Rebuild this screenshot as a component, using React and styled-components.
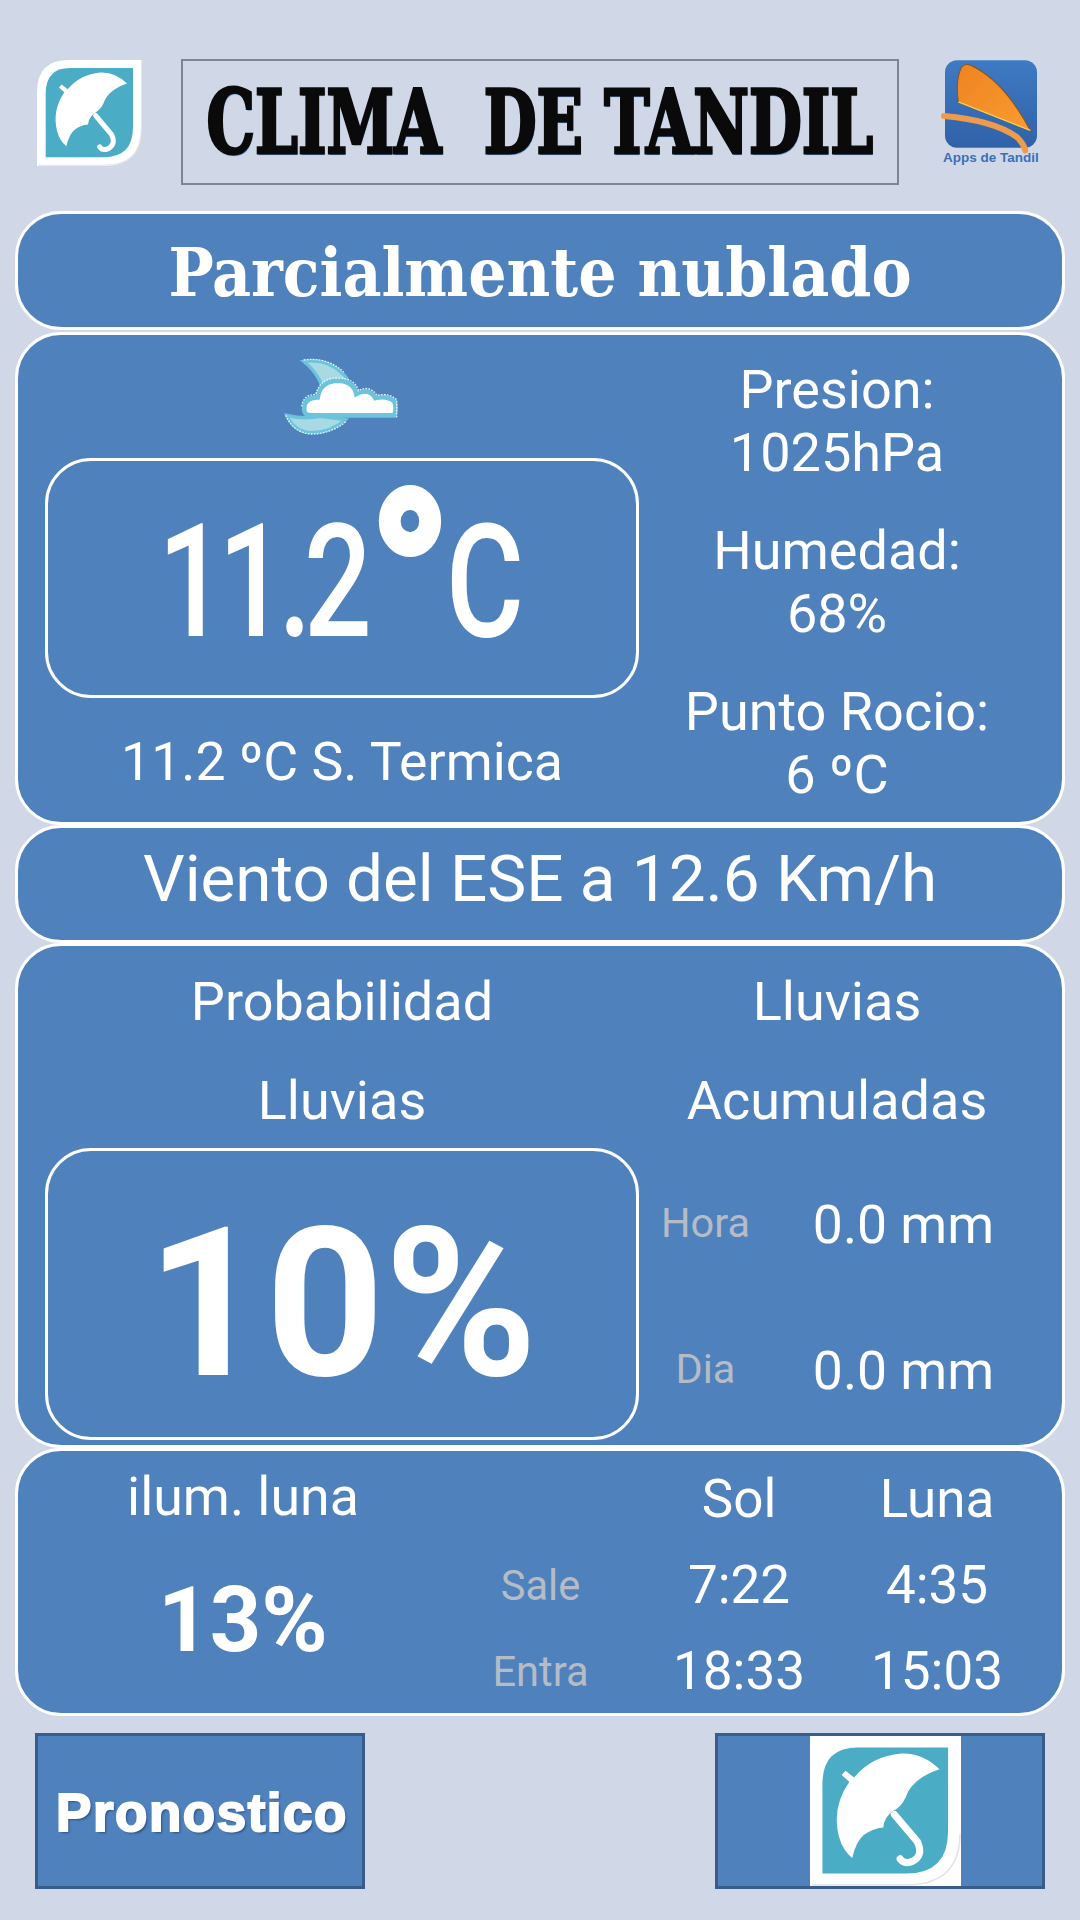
import React from 'react'
import styled, { createGlobalStyle } from 'styled-components'

const GlobalStyle = createGlobalStyle`
  html, body { margin: 0; padding: 0; background: #d0d8e8; }
  body { font-family: Roboto, "Liberation Sans", sans-serif; color: #fff; }
`

function UmbrellaIcon({ className }) {
  return (
    <svg className={className} viewBox="0 0 315 315" preserveAspectRatio="none">
      <path d="M0 95Q0 0 95 0H313V205Q313 315 200 315H0Z" fill="#fff" />
      <path d="M313 205Q313 313 200 313H4" fill="none" stroke="#dfe2e8" strokeWidth="3" />
      <path d="M26 100Q26 24 100 24H288V200Q288 289 200 289H26Z" fill="#4bacc6" />
      <path
        d="M270 70Q235 35 190 37Q130 42 92 87L74 73L66 82L82 96Q45 150 60 210Q68 240 88 256Q96 222 112 208Q130 194 153 192Q155 170 172 158Q190 150 200 128Q212 90 270 70Z"
        fill="#fff"
      />
      <path d="M176 165L224 222Q238 252 212 264Q196 270 188 258" fill="none" stroke="#fff" strokeWidth="15" strokeLinecap="round" />
    </svg>
  )
}

function AppsLogo() {
  return (
    <svg width="92" height="88" viewBox="0 0 275 262" style={{ overflow: 'visible' }}>
      <defs>
        <linearGradient id="appsBlue" x1="0" y1="0" x2="0" y2="1">
          <stop offset="0" stopColor="#3f7ac4" />
          <stop offset="1" stopColor="#2f62a8" />
        </linearGradient>
        <linearGradient id="appsSail" x1="0" y1="0" x2="1" y2="1">
          <stop offset="0" stopColor="#ee8420" />
          <stop offset="1" stopColor="#fa9b30" />
        </linearGradient>
      </defs>
      <rect width="275" height="262" rx="36" fill="url(#appsBlue)" />
      <path d="M40 125Q30 60 50 20Q65 5 90 22Q180 70 255 210Z" fill="url(#appsSail)" stroke="#8a5414" strokeWidth="3" />
      <path d="M40 125L255 210" stroke="#ffd24a" strokeWidth="4" />
      <path d="M-3 167Q145 180 215 230Q235 248 240 270" fill="none" stroke="#f09a4c" strokeWidth="18" strokeLinecap="round" />
    </svg>
  )
}

function MoonCloud() {
  return (
    <svg width="110" height="76" viewBox="0 0 330 228" style={{ overflow: 'visible' }}>
      <path d="M50 10Q120 0 165 45Q200 75 170 100L110 120Q110 60 50 10Z" fill="#a9d9e4" stroke="#6cc3dc" strokeWidth="10" />
      <path d="M0 172Q50 185 100 175L175 185Q130 225 70 224Q20 220 0 172Z" fill="#a9d9e4" stroke="#6cc3dc" strokeWidth="10" />
      <path d="M72 172Q48 172 52 145Q56 118 92 118Q100 68 155 68Q200 70 208 108Q245 88 265 120Q300 112 322 130Q330 150 322 172Z" fill="#fff" stroke="#6cc3dc" strokeWidth="14" />
      <path d="M50 6Q120 -4 170 42M-4 172Q20 224 70 228Q130 229 178 190M44 145Q50 108 86 110Q100 58 155 60Q205 62 214 98Q248 80 270 112Q305 104 329 125V178" fill="none" stroke="#e8f6fa" strokeWidth="4" strokeDasharray="5 4" />
    </svg>
  )
}

export default function App() {
  return (
    <Page>
      <GlobalStyle />
      <Header>
        <HeaderIcon />
        <TitleBox><TitleText>CLIMA&nbsp; DE TANDIL</TitleText></TitleBox>
        <AppsBadge>
          <AppsLogo />
          <AppsLabel>Apps de Tandil</AppsLabel>
        </AppsBadge>
      </Header>

      <Panels>
        <ConditionBanner $height={119}>
          <Condition>Parcialmente nublado</Condition>
        </ConditionBanner>

        <SplitPanel $height={493} $top={23}>
          <Column>
            <IconSlot><MoonCloud /></IconSlot>
            <DisplayBox $height={240}>
              <Temperature>11.2<Degree>°</Degree>C</Temperature>
            </DisplayBox>
            <Caption>11.2 ºC S. Termica</Caption>
          </Column>
          <StatList>
            <Stat>Presion:<br />1025hPa</Stat>
            <Stat>Humedad:<br />68%</Stat>
            <Stat>Punto Rocio:<br />6 ºC</Stat>
          </StatList>
        </SplitPanel>

        <Banner $height={118}>
          <Wind>Viento del ESE a 12.6 Km/h</Wind>
        </Banner>

        <SplitPanel $height={505} $top={26}>
          <Column>
            <RainHeads>
              <RainHeading>Probabilidad</RainHeading>
              <RainHeading>Lluvias</RainHeading>
            </RainHeads>
            <DisplayBox $height={292}>
              <Percent>10%</Percent>
            </DisplayBox>
          </Column>
          <Column>
            <RainHeads>
              <RainHeading>Lluvias</RainHeading>
              <RainHeading>Acumuladas</RainHeading>
            </RainHeads>
            <RainRows>
              <RainRow><RainLabel>Hora</RainLabel><RainValue>0.0 mm</RainValue></RainRow>
              <RainRow><RainLabel>Dia</RainLabel><RainValue>0.0 mm</RainValue></RainRow>
            </RainRows>
          </Column>
        </SplitPanel>

        <AstroPanel>
          <MoonColumn>
            <MoonTitle>ilum. luna</MoonTitle>
            <MoonValue>13%</MoonValue>
          </MoonColumn>
          <AstroTable>
            <span />
            <AstroCell>Sol</AstroCell>
            <AstroCell>Luna</AstroCell>
            <AstroLabel>Sale</AstroLabel>
            <AstroCell>7:22</AstroCell>
            <AstroCell>4:35</AstroCell>
            <AstroLabel>Entra</AstroLabel>
            <AstroCell>18:33</AstroCell>
            <AstroCell>15:03</AstroCell>
          </AstroTable>
        </AstroPanel>
      </Panels>

      <Footer>
        <FooterButton><ButtonText>Pronostico</ButtonText></FooterButton>
        <FooterButton><ButtonIconWrap><ButtonIcon /></ButtonIconWrap></FooterButton>
      </Footer>
    </Page>
  )
}

const Page = styled.div`
  width: 1080px;
  height: 1920px;
  overflow: hidden;
  padding-top: 59px;
  box-sizing: border-box;
  background: #d0d8e8;
`
const Header = styled.header`
  display: flex;
  align-items: flex-start;
  height: 126px;
  padding-left: 37px;
`
const HeaderIcon = styled(UmbrellaIcon)`
  width: 105px;
  height: 106px;
  margin-top: 1px;
  flex: none;
`
const TitleBox = styled.h1`
  box-sizing: border-box;
  width: 718px;
  height: 126px;
  margin: 0 0 0 39px;
  border: 2px solid #7f8590;
  display: flex;
  align-items: center;
  justify-content: center;
  overflow: hidden;
`
const TitleText = styled.span`
  white-space: nowrap;
  font: 700 88px/1 "DejaVu Serif", serif;
  font-stretch: condensed;
  color: #0a0a0a;
  -webkit-text-stroke: 3px #0a0a0a;
  text-shadow: 1px 2px 1px #3f76b4;
  transform: scaleX(0.77);
`
const AppsBadge = styled.div`
  margin: 1px 0 0 44px;
  width: 96px;
  display: flex;
  flex-direction: column;
  align-items: center;
`
const AppsLabel = styled.span`
  margin-top: 3px;
  font: 700 13.5px/14px "Liberation Sans", sans-serif;
  color: #3b6fb6;
  white-space: nowrap;
`
const Panels = styled.main`
  margin: 26px 15px 0;
  display: flex;
  flex-direction: column;
`
const PanelBase = styled.section`
  box-sizing: border-box;
  background: #4f81bd;
  border: 3px solid #fff;
  border-radius: 46px;
`
const Banner = styled(PanelBase)`
  height: ${p => p.$height}px;
  display: flex;
  align-items: center;
  justify-content: center;
`
const ConditionBanner = styled(Banner)`
  margin-bottom: 2px;
`
const Condition = styled.div`
  font: 700 67px/1 "DejaVu Serif", serif;
  font-stretch: condensed;
  padding-top: 4px;
`
const Wind = styled.div`
  font-size: 65.6px;
  line-height: 1;
  padding-bottom: 10px;
`
const SplitPanel = styled(PanelBase)`
  height: ${p => p.$height}px;
  padding: ${p => p.$top}px 27px 0;
  display: grid;
  grid-template-columns: 594px 396px;
`
const Column = styled.div`
  display: flex;
  flex-direction: column;
  align-items: stretch;
  min-width: 0;
`
const IconSlot = styled.div`
  height: 100px;
  display: flex;
  justify-content: center;
  align-items: flex-start;
`
const DisplayBox = styled.div`
  box-sizing: border-box;
  height: ${p => p.$height}px;
  border: 3px solid #fff;
  border-radius: 46px;
  padding-top: 8px;
  display: flex;
  align-items: center;
  justify-content: center;
`
const Temperature = styled.div`
  font-size: 157px;
  font-weight: 500;
  line-height: 1;
  letter-spacing: -10px;
  padding-right: 12px;
  white-space: nowrap;
  transform: scaleX(0.76);
`
const Degree = styled.span`
  display: inline-block;
  margin-left: 14px;
  font-size: 240px;
  font-weight: 700;
  line-height: 0;
  letter-spacing: 0;
  vertical-align: -26px;
  -webkit-text-stroke: 8px #fff;
  transform: scaleX(1.15);
`
const Caption = styled.div`
  margin-top: 33px;
  text-align: center;
  font-size: 53.6px;
  line-height: 62px;
`
const StatList = styled.div`
  display: flex;
  flex-direction: column;
  gap: 35px;
`
const Stat = styled.div`
  text-align: center;
  font-size: 54px;
  line-height: 63px;
`
const RainHeads = styled.div`
  display: flex;
  flex-direction: column;
  gap: 39px;
  margin-bottom: 17px;
`
const RainHeading = styled.div`
  text-align: center;
  font-size: 54px;
  line-height: 60px;
`
const Percent = styled.div`
  font-size: 207px;
  font-weight: 700;
  line-height: 1;
  padding-top: 12px;
`
const RainRows = styled.div`
  display: flex;
  flex-direction: column;
  gap: 86px;
  margin-top: 45px;
`
const RainRow = styled.div`
  display: grid;
  grid-template-columns: 133px 1fr;
  align-items: center;
  height: 60px;
`
const RainLabel = styled.span`
  text-align: center;
  font-size: 41.5px;
  color: #b5bcc6;
  padding-bottom: 4px;
`
const RainValue = styled.span`
  text-align: center;
  font-size: 53.5px;
`
const AstroPanel = styled(PanelBase)`
  height: 268px;
  padding-top: 5px;
  display: flex;
`
const MoonColumn = styled.div`
  width: 447px;
  padding: 10px 0 0 3px;
  box-sizing: border-box;
  text-align: center;
`
const MoonTitle = styled.div`
  font-size: 53.7px;
  line-height: 62px;
`
const MoonValue = styled.div`
  margin-top: 48px;
  font-size: 90px;
  font-weight: 700;
  line-height: 90px;
`
const AstroTable = styled.div`
  display: grid;
  grid-template-columns: 199px 198px 198px;
  grid-auto-rows: 86px;
  align-items: center;
  text-align: center;
  margin-left: -24px;
`
const AstroCell = styled.span`
  font-size: 53px;
`
const AstroLabel = styled.span`
  font-size: 41.6px;
  color: #b5bcc6;
`
const Footer = styled.footer`
  margin: 17px 35px 0;
  display: flex;
  justify-content: space-between;
`
const FooterButton = styled.button`
  box-sizing: border-box;
  width: 330px;
  height: 156px;
  padding: 0;
  background: #4f81bd;
  border: 3px solid #385d8a;
  display: flex;
  align-items: center;
  justify-content: center;
`
const ButtonText = styled.span`
  font: 700 53px/1 "Liberation Sans", sans-serif;
  letter-spacing: 1.5px;
  padding: 2px 0 0 4px;
  color: #fff;
  -webkit-text-stroke: 2px #fff;
  text-shadow: 2px 2px 2px #2f5583;
`
const ButtonIconWrap = styled.span`
  width: 151px;
  height: 150px;
  margin-left: 11px;
  background: #fff;
  display: flex;
`
const ButtonIcon = styled(UmbrellaIcon)`
  width: 100%;
  height: 100%;
`
